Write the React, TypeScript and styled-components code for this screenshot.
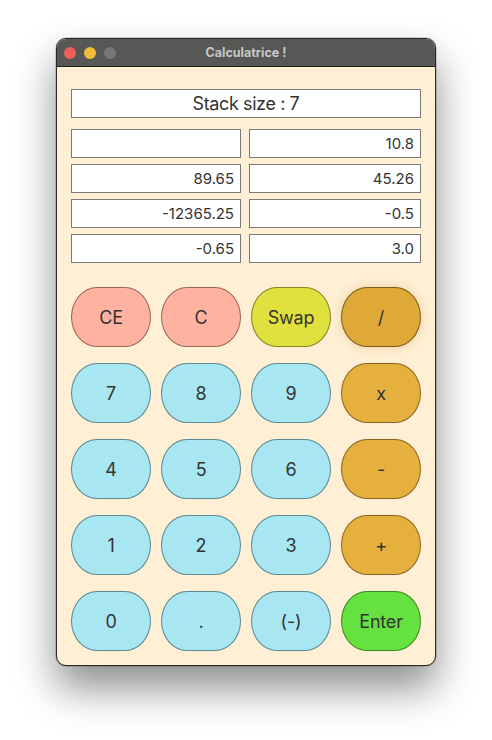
import React from "react";
import styled, { createGlobalStyle } from "styled-components";

const GlobalStyle = createGlobalStyle`
  html, body { margin: 0; padding: 0; background: #ffffff; }
  body { font-family: Inter, "Noto Sans", sans-serif; }
`

const Page = styled.div`
  width: 492px;
  height: 740px;
  padding: 38px 0 0 56px;
  box-sizing: border-box;
`

const Window = styled.div`
  width: 380px;
  height: 628px;
  box-sizing: border-box;
  border: 1px solid #2a2a2a;
  border-radius: 10px;
  overflow: hidden;
  background: #fff0d5;
  box-shadow: 0 22px 40px rgba(0, 0, 0, 0.45), 0 0 0 0.5px rgba(0, 0, 0, 0.3);
  display: flex;
  flex-direction: column;
`

const TitleBar = styled.div`
  height: 27px;
  flex: none;
  background: #575856;
  border-bottom: 1px solid #1e1e1e;
  display: flex;
  align-items: center;
  padding-left: 7px;
  position: relative;
`

const Light = styled.span<{ $color: string }>`
  width: 12px;
  height: 12px;
  border-radius: 50%;
  background: ${p => p.$color};
  margin-right: 8px;
`

const Title = styled.div`
  position: absolute;
  left: 0;
  right: 0;
  text-align: center;
  font-size: 12.5px;
  font-weight: 700;
  color: #c6c6c6;
  pointer-events: none;
`

const Body = styled.div`
  padding: 22px 14px 0 14px;
  display: flex;
  flex-direction: column;
`

const StackSize = styled.div`
  height: 29px;
  box-sizing: border-box;
  background: #fff;
  border: 1px solid #7a7a7a;
  display: flex;
  align-items: center;
  justify-content: center;
  font-size: 18px;
  letter-spacing: -0.4px;
  color: #333;
`

const StackGrid = styled.div`
  margin-top: 11px;
  display: grid;
  grid-template-columns: 170px 172px;
  column-gap: 8px;
  row-gap: 6px;
`

const Cell = styled.div`
  height: 29px;
  box-sizing: border-box;
  background: #fff;
  border: 1px solid #7a7a7a;
  display: flex;
  align-items: center;
  justify-content: flex-end;
  padding-right: 6px;
  font-size: 15px;
  color: #333;
`

const Keypad = styled.div`
  margin-top: 24px;
  display: grid;
  grid-template-columns: repeat(4, 80px);
  grid-auto-rows: 60px;
  column-gap: 10px;
  row-gap: 16px;
`

const kinds = {
  clear: { bg: "#ffb29f", border: "#9a6458" },
  swap: { bg: "#e0e03e", border: "#84841e" },
  op: { bg: "#e6b03e", border: "#8a6520" },
  opActive: { bg: "#dea936", border: "#7e5a18" },
  num: { bg: "#a8e6f1", border: "#5a8791" },
  enter: { bg: "#66e240", border: "#3a8722" },
}

type Kind = keyof typeof kinds

const Key = styled.button<{ $kind: Kind }>`
  width: 80px;
  height: 60px;
  box-sizing: border-box;
  border-radius: 26px / 30px;
  border: 1px solid ${p => kinds[p.$kind].border};
  background: ${p => kinds[p.$kind].bg};
  color: #333;
  font-family: Inter, "Noto Sans", sans-serif;
  font-size: 18px;
  letter-spacing: -0.2px;
  padding: 0;
  box-shadow: ${p => (p.$kind === "opActive" ? "0 0 12px rgba(200, 150, 60, 0.35)" : "none")};
`

const stack = ["", "10.8", "89.65", "45.26", "-12365.25", "-0.5", "-0.65", "3.0"]

const keys: [string, Kind][] = [
  ["CE", "clear"], ["C", "clear"], ["Swap", "swap"], ["/", "opActive"],
  ["7", "num"], ["8", "num"], ["9", "num"], ["x", "op"],
  ["4", "num"], ["5", "num"], ["6", "num"], ["-", "op"],
  ["1", "num"], ["2", "num"], ["3", "num"], ["+", "op"],
  ["0", "num"], [".", "num"], ["(-)", "num"], ["Enter", "enter"],
]

const App = () => {
  return (
    <>
      <GlobalStyle/>
      <Page>
        <Window>
          <TitleBar>
            <Light $color="#ed5f57"/>
            <Light $color="#f0bb3a"/>
            <Light $color="#787878"/>
            <Title>Calculatrice !</Title>
          </TitleBar>
          <Body>
            <StackSize>Stack size : 7</StackSize>
            <StackGrid>
              {stack.map((v, i) => <Cell key={i}>{v}</Cell>)}
            </StackGrid>
            <Keypad>
              {keys.map(([label, kind]) => <Key key={label} $kind={kind}>{label}</Key>)}
            </Keypad>
          </Body>
        </Window>
      </Page>
    </>
  )
}

export default App
